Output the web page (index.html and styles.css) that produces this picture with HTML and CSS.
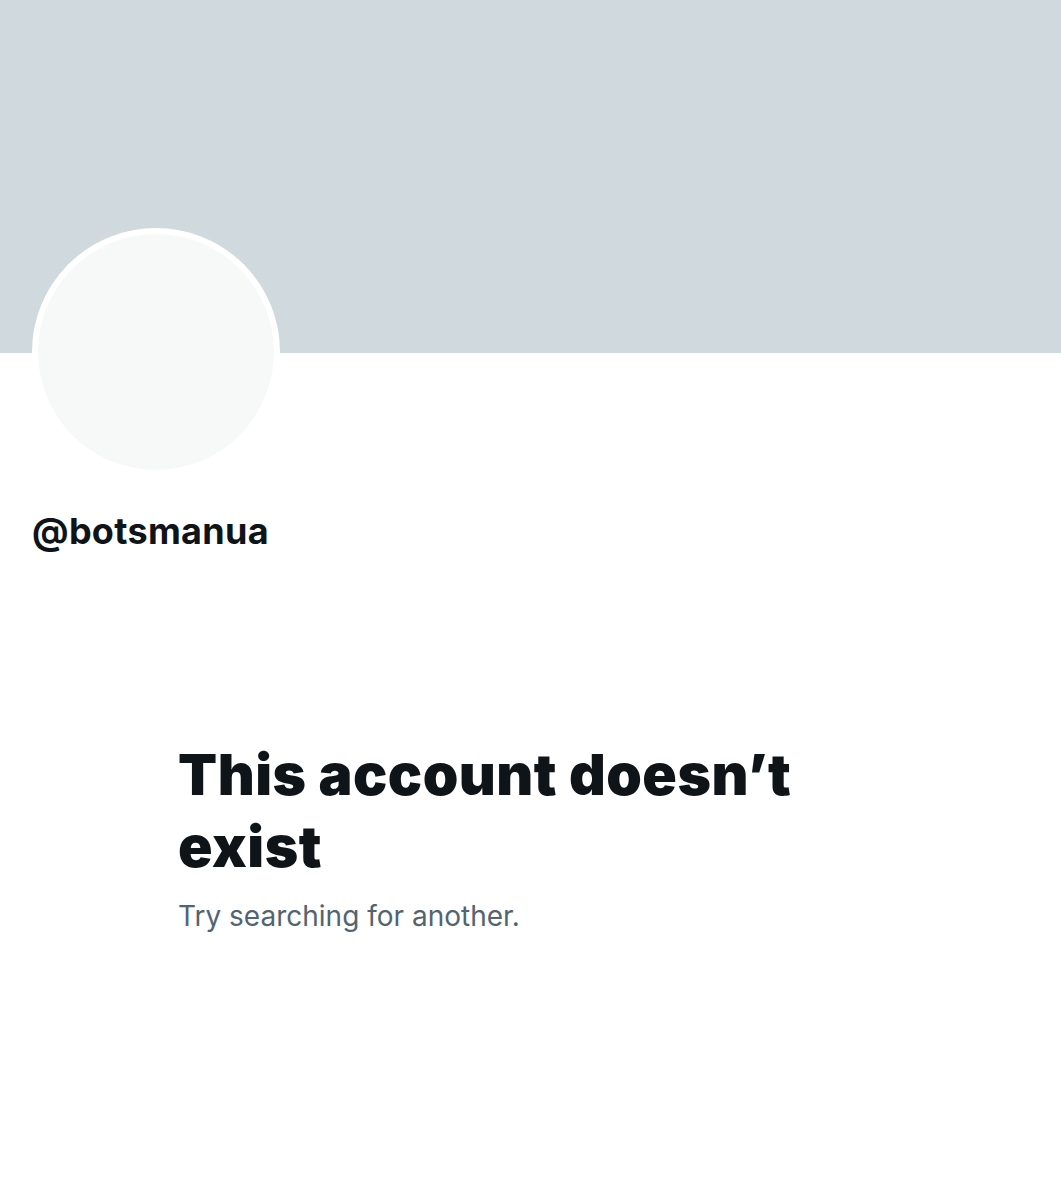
FILE: index.html
```html
<!DOCTYPE html>
<html>
<head>
<meta charset="utf-8">
<link rel="stylesheet" href="styles.css">
</head>
<body>
<div class="banner"></div>
<div class="profile">
  <div class="avatar"></div>
  <div class="handle">@botsmanua</div>
</div>
<div class="empty">
  <h1 class="title">This account doesn’t exist</h1>
  <p class="sub">Try searching for another.</p>
</div>
</body>
</html>
```

FILE: styles.css
```css
html, body {
  margin: 0;
  padding: 0;
  background: #ffffff;
}
body {
  font-family: Inter, "Liberation Sans", sans-serif;
  color: #0f1419;
  width: 1061px;
  height: 1200px;
  overflow: hidden;
}
.banner {
  height: 353px;
  background: #cfd9de;
}
.profile {
  padding-left: 32px;
}
.avatar {
  width: 236px;
  height: 236px;
  border: 6px solid #ffffff;
  border-radius: 50%;
  background: #f7f9f9;
  margin-top: -125px;
}
.handle {
  margin-top: 32px;
  font-size: 36px;
  font-weight: 700;
  line-height: 46px;
  letter-spacing: 0.3px;
}
.empty {
  padding-left: 178px;
  padding-top: 185px;
  width: 680px;
}
.title {
  margin: 0;
  font-size: 57px;
  font-weight: 900;
  line-height: 72px;
  letter-spacing: 0.5px;
}
.sub {
  margin: 15px 0 0;
  font-size: 28px;
  line-height: 36px;
  color: #536471;
}
```
